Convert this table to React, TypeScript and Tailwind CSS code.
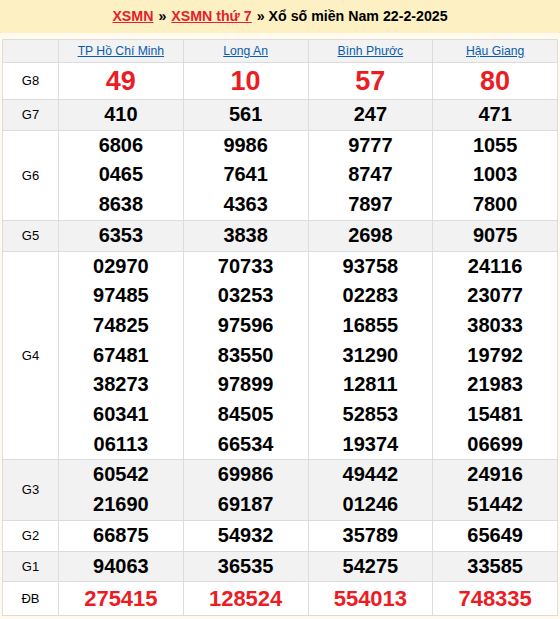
const provinces = ["TP Hồ Chí Minh", "Long An", "Bình Phước", "Hậu Giang"];

type Row = { label: string; values: string[][]; kind?: "g8" | "db"; gray?: boolean };

const rows: Row[] = [
  { label: "G8", kind: "g8", values: [["49"], ["10"], ["57"], ["80"]] },
  { label: "G7", gray: true, values: [["410"], ["561"], ["247"], ["471"]] },
  {
    label: "G6",
    values: [
      ["6806", "0465", "8638"],
      ["9986", "7641", "4363"],
      ["9777", "8747", "7897"],
      ["1055", "1003", "7800"],
    ],
  },
  { label: "G5", gray: true, values: [["6353"], ["3838"], ["2698"], ["9075"]] },
  {
    label: "G4",
    values: [
      ["02970", "97485", "74825", "67481", "38273", "60341", "06113"],
      ["70733", "03253", "97596", "83550", "97899", "84505", "66534"],
      ["93758", "02283", "16855", "31290", "12811", "52853", "19374"],
      ["24116", "23077", "38033", "19792", "21983", "15481", "06699"],
    ],
  },
  {
    label: "G3",
    gray: true,
    values: [
      ["60542", "21690"],
      ["69986", "69187"],
      ["49442", "01246"],
      ["24916", "51442"],
    ],
  },
  { label: "G2", values: [["66875"], ["54932"], ["35789"], ["65649"]] },
  { label: "G1", gray: true, values: [["94063"], ["36535"], ["54275"], ["33585"]] },
  { label: "ĐB", kind: "db", values: [["275415"], ["128524"], ["554013"], ["748335"]] },
];

function Num({ n, kind }: { n: string; kind?: Row["kind"] }) {
  if (kind === "g8")
    return <div className="text-[27px] leading-[36px] font-bold text-[#ec1c24]">{n}</div>;
  if (kind === "db")
    return <div className="text-[22px] leading-[33px] font-bold text-[#ec1c24]">{n}</div>;
  return <div className="text-[20px] leading-[29.7px] font-bold text-black">{n}</div>;
}

export default function App() {
  return (
    <div className="w-[560px] bg-white font-['Liberation_Sans',Arial,sans-serif]">
      <div className="h-[33px] bg-[#fdf0c2] flex items-center justify-center pt-[1px] text-[14.2px] font-bold text-black">
        <a href="#" className="text-[#e8202a] underline">XSMN</a>
        <span className="mx-[5px]">»</span>
        <a href="#" className="text-[#e8202a] underline">XSMN thứ 7</a>
        <span className="ml-[5px]">» Xổ số miền Nam 22-2-2025</span>
      </div>
      <div className="pt-[6px] pb-[4px] px-[2px] bg-[#fff9ee]">
        <table className="w-full border-collapse bg-white text-center table-fixed">
          <colgroup>
            <col className="w-[56px]" />
            <col />
            <col />
            <col />
            <col />
          </colgroup>
          <thead>
            <tr className="bg-[#f2f2f2] h-[23px]">
              <th className="border border-[#dcdcdc]"></th>
              {provinces.map((p) => (
                <th key={p} className="border border-[#dcdcdc] font-normal text-[12.2px]">
                  <a href="#" className="text-[#0b5cad] underline">{p}</a>
                </th>
              ))}
            </tr>
          </thead>
          <tbody>
            {rows.map((r) => (
              <tr key={r.label} className={r.gray ? "bg-[#f2f2f2]" : "bg-white"}>
                <td className="border border-[#dcdcdc] text-[13px] text-black">{r.label}</td>
                {r.values.map((vals, i) => (
                  <td key={i} className="border border-[#dcdcdc] p-0">
                    {vals.map((v) => (
                      <Num key={v} n={v} kind={r.kind} />
                    ))}
                  </td>
                ))}
              </tr>
            ))}
          </tbody>
        </table>
      </div>
    </div>
  );
}
